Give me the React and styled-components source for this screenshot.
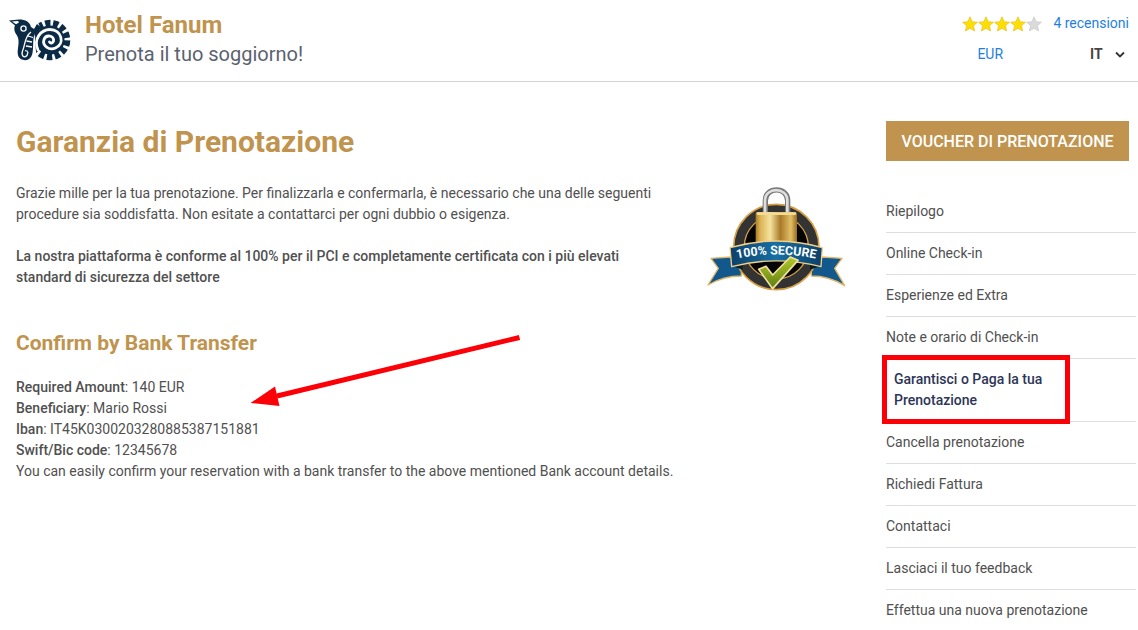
import React from "react";
import styled, { createGlobalStyle } from "styled-components";

const GOLD = "#c0944e";
const NAVY = "#0b2a45";

const GlobalStyle = createGlobalStyle`
  *, *::before, *::after { box-sizing: border-box; }
  body {
    margin: 0;
    background: #fff;
    color: #505050;
    font: 400 14px/21px Roboto, "Liberation Sans", sans-serif;
  }
  h1, h2, p, ul { margin: 0; padding: 0; }
`;

const Header = styled.header`
  display: flex;
  justify-content: space-between;
  align-items: flex-start;
  padding: 10px 9px 12px 8px;
  border-bottom: 1px solid #d3d3d3;
`;

const Brand = styled.div`
  display: flex;
  gap: 13px;
`;

const Logo = styled.svg`
  width: 64px;
  height: 44px;
  margin-top: 8px;
`;

const HotelName = styled.a`
  display: block;
  color: ${GOLD};
  font-size: 24px;
  font-weight: 700;
  line-height: 30px;
  text-decoration: none;
`;

const Tagline = styled.p`
  color: #5b6270;
  font-size: 20px;
  line-height: 29px;
`;

const Tools = styled.div`
  display: flex;
  flex-direction: column;
  gap: 10px;
  padding-top: 3px;
`;

const ToolRow = styled.div`
  display: flex;
  align-items: center;
  justify-content: space-between;
  gap: 11px;
  padding-left: ${(p) => p.$inset || 0};
`;

const Stars = styled.svg`
  width: 80px;
  height: 16px;
`;

const BlueLink = styled.a`
  color: #1f80dc;
  text-decoration: none;
`;

const LanguageField = styled.label`
  display: flex;
  align-items: center;
  gap: 6px;
  margin-right: 3px;
`;

const LanguageSelect = styled.select`
  appearance: none;
  width: 18px;
  padding: 0;
  border: 0;
  background: none;
  color: #444;
  font: 700 14px/21px Roboto, "Liberation Sans", sans-serif;
`;

const Chevron = styled.svg`
  width: 12px;
  height: 12px;
  pointer-events: none;
`;

const Page = styled.div`
  display: grid;
  grid-template-columns: minmax(0, 1fr) 250px;
  gap: 36px;
  padding: 39px 2px 0 16px;
`;

const Title = styled.h1`
  color: ${GOLD};
  font-size: 30px;
  font-weight: 700;
  line-height: 42px;
`;

const Intro = styled.div`
  display: grid;
  grid-template-columns: minmax(0, 1fr) 150px;
  align-items: start;
  gap: 36px;
  margin: 20px 0 32px;
`;

const Copy = styled.div`
  display: grid;
  gap: 21px;
`;

const StrongText = styled.p`
  font-weight: 500;
`;

const SecureSeal = styled.svg`
  width: 150px;
  height: 115px;
  margin-top: -2px;
`;

const Transfer = styled.section`
  position: relative;
`;

const SectionTitle = styled.h2`
  margin-bottom: 19px;
  color: ${GOLD};
  font-size: 21px;
  font-weight: 700;
  line-height: 30px;
`;

const Detail = styled.p`
  b { font-weight: 500; }
`;

const Arrow = styled.svg`
  position: absolute;
  left: 232px;
  top: 4px;
  width: 274px;
  height: 76px;
  pointer-events: none;
`;

const Sidebar = styled.aside`
  display: flex;
  flex-direction: column;
  gap: 30px;
`;

const VoucherButton = styled.button`
  height: 40px;
  margin-right: 7px;
  padding: 1px 0 0;
  border: 0;
  background: ${GOLD};
  color: #fff;
  font: 500 16px/24px Roboto, "Liberation Sans", sans-serif;
  white-space: nowrap;
`;

const Menu = styled.ul`
  list-style: none;
`;

const MenuItem = styled.li`
  position: relative;
  padding: ${(p) => (p.$active ? "10px 80px 10px 8px" : "10px 0")};
  border-bottom: 1px solid #dedede;

  &:last-child { border-bottom: 0; padding-bottom: 0; }
`;

const MenuLink = styled.a`
  display: block;
  color: ${(p) => (p.$active ? "#2d3557" : "#505050")};
  font-weight: ${(p) => (p.$active ? 500 : 400)};
  text-decoration: none;
`;

const Highlight = styled.span`
  position: absolute;
  left: -4px;
  top: -4px;
  width: 188px;
  height: 69px;
  border: 5px solid #fb0007;
  pointer-events: none;
`;

const NOTCHES = [-138, -111, -84, -57, -30, -3, 24, 51, 78, 105, 132];

function HotelLogo() {
  return (
    <Logo viewBox="8 18 64 44" role="img" aria-label="Hotel Fanum">
      <circle cx="50" cy="40" r="20.300" fill={NAVY} />
      {NOTCHES.map((a) => (
        <path key={a} d="M64.500 38.900 L71 38.300 V41.700 L64.500 41.100Z" fill="#fff" transform={`rotate(${a} 50 40)`} />
      ))}
      <path
        d="M38 50 C33 39 41 29.500 50 29.500 C62 29.500 65 44 55.500 48 C49 51 42 45.500 44 39.500 C46 34 54.500 35.500 53.500 41 C53 43.500 50.500 43.500 49.500 42"
        fill="none" stroke="#fff" strokeWidth="2.800" strokeLinecap="round"
      />
      <path d="M29 20 L37 20 L40 27 C36 31 35 35 35 42 L37 60 L31 61 L33 44 L30 30Z" fill="#fff" />
      <path d="M34 29 L37 24 L42 28 C38 31 36 34 35 38Z" fill={NAVY} />
      <path
        d="M9 20.500 L19 19.600 C25 19.500 30 22 31 27 L34 29 L36 32 C32 37 34 44 32.500 53 C31.500 58 28 61 24 60 C18 59 17 55 18 48 C19 42 19 38 16 34 C14 31 14 27 15 25.500Z"
        fill={NAVY}
      />
      <path d="M12 21.400 L18 20.900 L19 22.500 L16 24.200Z" fill="#fff" />
      <circle cx="23.500" cy="28.500" r="2.600" fill={NAVY} stroke="#fff" strokeWidth="1.300" />
      <path
        d="M31 32 C24 37 25.500 45 22.500 51 C21 56 24 58.500 27 55.500 L28 52 M28 36 L33 37.500 M26.500 41 L32 42 M26 46 L32 47 M25 50.500 L28 51.500"
        fill="none" stroke="#fff" strokeWidth="1.300"
      />
    </Logo>
  );
}

const STAR = "M8 0.800 L10.100 5.700 L15.400 6.200 L11.400 9.700 L12.600 15 L8 12.200 L3.400 15 L4.600 9.700 L0.600 6.200 L5.900 5.700Z";

function Rating() {
  return (
    <Stars viewBox="0 0 80 16" role="img" aria-label="4 / 5">
      {[0, 1, 2, 3, 4].map((i) => (
        <path
          key={i}
          d={STAR}
          transform={`translate(${i * 16} 0)`}
          fill={i < 4 ? "#ffdf00" : "#dadada"}
          stroke={i < 4 ? "#e8bd20" : "#c8c8c8"}
          strokeWidth="0.700"
        />
      ))}
    </Stars>
  );
}

function Seal() {
  return (
    <SecureSeal viewBox="0 0 450 345" role="img" aria-label="100% Secure">
      <defs>
        <linearGradient id="brass">
          <stop offset="0" stopColor="#a97d28" />
          <stop offset="0.100" stopColor="#d9b04f" />
          <stop offset="0.350" stopColor="#f6e3a0" />
          <stop offset="0.600" stopColor="#a97a27" />
          <stop offset="0.850" stopColor="#e2bf68" />
          <stop offset="1" stopColor="#9a6c1d" />
        </linearGradient>
        <linearGradient id="ribbon">
          <stop offset="0" stopColor="#0c3f68" />
          <stop offset="0.500" stopColor="#1770a5" />
          <stop offset="1" stopColor="#0c3f68" />
        </linearGradient>
        <linearGradient id="tick" x1="0" y1="0" x2="0" y2="1">
          <stop offset="0" stopColor="#b4c92a" />
          <stop offset="1" stopColor="#5c7d12" />
        </linearGradient>
        <path id="sealArc" d="M102 235 Q228 206 356 235" />
      </defs>
      <g stroke="#e0b566" strokeWidth="4" strokeLinejoin="round">
        <path d="M92 228 L33 232 L55 262 L24 312 Q70 285 124 285 L124 258Z" fill="#12588c" />
        <path d="M366 228 L426 232 L404 262 L434 314 Q388 285 334 285 L334 258Z" fill="#12588c" />
      </g>
      <circle cx="229" cy="198" r="128" fill="#333" stroke="#d6a146" strokeWidth="5" />
      <circle cx="229" cy="198" r="96" fill="#050505" stroke="#d6a146" strokeWidth="4" />
      <path d="M196 98 V59 C196 16 263 16 263 59 V98" fill="none" stroke="#777" strokeWidth="16" />
      <path d="M195 98 V59 C195 17 262 17 262 59 V98" fill="none" stroke="#dedede" strokeWidth="8" />
      <rect x="167" y="93" width="124" height="100" rx="5" fill="url(#brass)" />
      <rect x="170" y="94" width="118" height="8" rx="3" fill="#f4dc96" />
      <path d="M94 254 L128 244 V266Z M364 254 L330 244 V266Z" fill="#071e30" />
      <path
        d="M90 200 Q228 160 367 200 L363 257 Q228 222 95 257Z"
        fill="url(#ribbon)" stroke="#f1cf86" strokeWidth="4" strokeLinejoin="round"
      />
      <text fill="#fff" fontFamily="Roboto, sans-serif" fontSize="37" fontWeight="700" textAnchor="middle">
        <textPath href="#sealArc" startOffset="50%">100% SECURE</textPath>
      </text>
      <path
        d="M176 265 L198 256 L218 282 L271 228 L294 238 L218 323Z"
        fill="url(#tick)" stroke="#f3e0a0" strokeWidth="5" strokeLinejoin="round"
      />
    </SecureSeal>
  );
}

const DETAILS = [
  ["Required Amount", "140 EUR"],
  ["Beneficiary", "Mario Rossi"],
  ["Iban", "IT45K0300203280885387151881"],
  ["Swift/Bic code", "12345678"],
];

const MENU = [
  "Riepilogo",
  "Online Check-in",
  "Esperienze ed Extra",
  "Note e orario di Check-in",
  "Garantisci o Paga la tua Prenotazione",
  "Cancella prenotazione",
  "Richiedi Fattura",
  "Contattaci",
  "Lasciaci il tuo feedback",
  "Effettua una nuova prenotazione",
];
const ACTIVE = 4;

export default function App() {
  return (
    <>
      <GlobalStyle />
      <Header>
        <Brand>
          <HotelLogo />
          <div>
            <HotelName href="#hotel">Hotel Fanum</HotelName>
            <Tagline>Prenota il tuo soggiorno!</Tagline>
          </div>
        </Brand>
        <Tools>
          <ToolRow>
            <Rating />
            <BlueLink href="#recensioni">4 recensioni</BlueLink>
          </ToolRow>
          <ToolRow $inset="15px">
            <BlueLink href="#valuta">EUR</BlueLink>
            <LanguageField>
              <LanguageSelect aria-label="Lingua" defaultValue="it">
                <option value="it">IT</option>
                <option value="en">EN</option>
              </LanguageSelect>
              <Chevron viewBox="0 0 12 12" aria-hidden="true">
                <path d="M2 3.500 L6 7.500 L10 3.500" fill="none" stroke="#333" strokeWidth="1.800" />
              </Chevron>
            </LanguageField>
          </ToolRow>
        </Tools>
      </Header>
      <Page>
        <main>
          <Title>Garanzia di Prenotazione</Title>
          <Intro>
            <Copy>
              <p>
                Grazie mille per la tua prenotazione. Per finalizzarla e confermarla, è necessario che una delle
                seguenti procedure sia soddisfatta. Non esitate a contattarci per ogni dubbio o esigenza.
              </p>
              <StrongText>
                La nostra piattaforma è conforme al 100% per il PCI e completamente certificata con i più elevati
                standard di sicurezza del settore
              </StrongText>
            </Copy>
            <Seal />
          </Intro>
          <Transfer>
            <SectionTitle>Confirm by Bank Transfer</SectionTitle>
            {DETAILS.map(([label, value]) => (
              <Detail key={label}>
                <b>{label}</b>: {value}
              </Detail>
            ))}
            <Detail>
              You can easily confirm your reservation with a bank transfer to the above mentioned Bank account details.
            </Detail>
            <Arrow viewBox="248 332 274 76" aria-hidden="true">
              <path d="M519.500 337.500 L277 396" stroke="#fb0007" strokeWidth="5" />
              <path d="M250.500 403 L275 386.500 L279.500 406Z" fill="#fb0007" />
            </Arrow>
          </Transfer>
        </main>
        <Sidebar>
          <VoucherButton type="button">VOUCHER DI PRENOTAZIONE</VoucherButton>
          <nav>
            <Menu>
              {MENU.map((label, i) => (
                <MenuItem key={label} $active={i === ACTIVE}>
                  <MenuLink href={`#voce-${i + 1}`} $active={i === ACTIVE}>{label}</MenuLink>
                  {i === ACTIVE && <Highlight />}
                </MenuItem>
              ))}
            </Menu>
          </nav>
        </Sidebar>
      </Page>
    </>
  );
}
